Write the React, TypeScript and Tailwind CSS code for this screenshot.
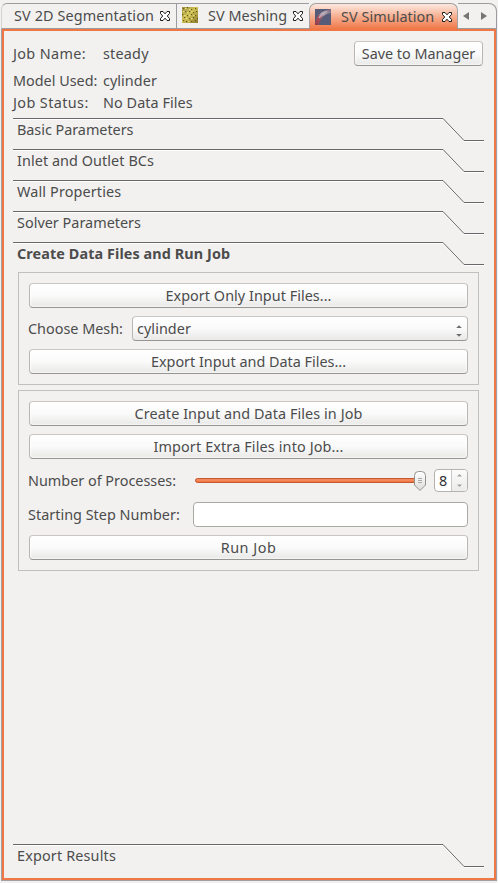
import type { ReactNode } from "react";

function CloseIcon() {
  return (
    <svg width="12" height="12" viewBox="0 0 12 12" className="shrink-0">
      <path
        d="M1.500 1.500H4L6 3.800L8 1.500H10.500V3.500L8.300 6L10.500 8.500V10.500H8L6 8.200L4 10.500H1.500V8.500L3.700 6L1.500 3.500Z"
        stroke="#1a1a1a"
        strokeWidth="1"
        fill="#fff"
      />
    </svg>
  );
}

function MeshIcon() {
  const dots = [
    [1, 1], [5, 0], [9, 2], [13, 1], [3, 4], [7, 4], [11, 5], [14, 4], [0, 7], [5, 8], [9, 7], [13, 8],
    [2, 10], [7, 11], [11, 10], [15, 11], [1, 13], [4, 14], [9, 14], [13, 13],
  ];
  const lights = [[3, 1], [7, 2], [1, 4], [5, 5], [9, 4], [2, 8], [7, 8], [11, 8], [4, 11], [9, 11], [6, 14]];
  return (
    <svg width="16" height="16" viewBox="0 0 16 16" className="shrink-0">
      <defs>
        <linearGradient id="mesh" x1="0" y1="0" x2="1" y2="1">
          <stop offset="0" stopColor="#9d9040" />
          <stop offset="0.45" stopColor="#d0c254" />
          <stop offset="1" stopColor="#8c7c2c" />
        </linearGradient>
      </defs>
      <rect width="16" height="16" fill="url(#mesh)" />
      {dots.map(([x, y]) => (
        <rect key={`d${x}-${y}`} x={x} y={y} width="1.2" height="1.2" fill="#66591e" />
      ))}
      {lights.map(([x, y]) => (
        <rect key={`l${x}-${y}`} x={x} y={y} width="1.5" height="1.2" fill="#e9df7c" />
      ))}
    </svg>
  );
}

function SimulationIcon() {
  return (
    <svg width="16" height="16" viewBox="0 0 16 16" className="shrink-0">
      <defs>
        <linearGradient id="vessel" x1="0" y1="1" x2="1" y2="0">
          <stop offset="0" stopColor="#8f3a4c" />
          <stop offset="0.35" stopColor="#a8505a" />
          <stop offset="0.6" stopColor="#b3a3b0" />
          <stop offset="1" stopColor="#79637a" />
        </linearGradient>
      </defs>
      <rect width="16" height="16" fill="#565c78" />
      <path d="M0 16C0 9 4 2 16 0V4C9 5 5 9 4 16Z" fill="url(#vessel)" />
      <path d="M4 9C6 5.500 8 3.500 12 2.500" stroke="#bdb8c8" strokeWidth="1.2" fill="none" />
    </svg>
  );
}

function Section({ title, className }: { title: string; className: string }) {
  return (
    <div className="grid h-[31px] shrink-0 content-start">
      <svg width="471" height="25" viewBox="0 0 471 25" className="col-start-1 row-start-1" fill="none">
        <path d="M0 1.500H430L451 23.500H471" stroke="#fff" />
        <path d="M0 .5H430L451 22.500H471" stroke="#68676a" />
      </svg>
      <div className="col-start-1 row-start-1 flex h-[23px] items-center pl-[4px]">
        <span className={className}>{title}</span>
      </div>
    </div>
  );
}

function Button({ children, className }: { children: ReactNode; className: string }) {
  return (
    <button
      className={`flex h-[25px] shrink-0 items-center justify-center rounded-[4px] border border-[#b9b7b4] border-t-[#c9c6c3] border-b-[#989693] bg-linear-to-b from-white via-[#fafafa] to-[#e9e8e7] shadow-[inset_0_0_2px_1px_#ffffffaa] ${className}`}
    >
      {children}
    </button>
  );
}

export default function App() {
  return (
    <div className="flex h-[883px] w-[498px] flex-col bg-[#f2f1f0] px-px pb-[2px] font-['Noto_Sans',sans-serif] text-[14.4px] leading-[20px] whitespace-nowrap text-[#4c4c4c]">
      <div className="flex h-[29px] shrink-0 pt-[3px]">
        <div className="flex w-[176px] items-center rounded-tl-[6px] border border-l-[#d5d4d3] border-[#9c9b9f] pl-[12px]">
          <span className="w-[145px] tracking-[0.12px]">SV 2D Segmentation</span>
          <CloseIcon />
        </div>
        <div className="flex w-[132px] items-center border-y border-[#9c9b9f] pl-[5px]">
          <div className="pb-[2px]">
            <MeshIcon />
          </div>
          <span className="ml-[10px] w-[84px] tracking-[0.04px]">SV Meshing</span>
          <CloseIcon />
        </div>
        <div className="flex w-[149px] items-center rounded-t-[7px] border border-b-0 border-[#a5a09f] bg-linear-to-b from-[#fbe3da] from-5% via-[#f6ae8f] via-50% to-[#f07746] pl-[5px]">
          <SimulationIcon />
          <span className="ml-[10px] w-[100px] tracking-[0.06px]">SV Simulation</span>
          <CloseIcon />
        </div>
        <div className="flex grow items-center justify-between rounded-tr-[8px] border border-l-0 border-[#9c9b9f] pr-[9px] pl-[5px]">
          <svg width="6" height="8" viewBox="0 0 6 8">
            <path d="M6 0V8L0 4Z" fill="#777574" />
          </svg>
          <svg width="6" height="8" viewBox="0 0 6 8">
            <path d="M0 0V8L6 4Z" fill="#777574" />
          </svg>
        </div>
      </div>

      <div className="flex grow border border-t-0 border-[#a1a0a4]">
        <div className="flex grow flex-col border-2 border-[#f07746] pt-[10px] pr-[10px] pb-[3px] pl-[9px]">
          <div className="mr-px flex h-[25px] shrink-0 items-center">
            <span className="w-[90px] tracking-[0.36px]">Job Name:</span>
            <span className="grow tracking-[0.2px]">steady</span>
            <Button className="w-[129px] tracking-[-0.02px]">Save to Manager</Button>
          </div>
          <div className="mt-[4px] flex h-[21px] shrink-0 items-center">
            <span className="w-[90px]">Model Used:</span>
            <span className="tracking-[0.05px]">cylinder</span>
          </div>
          <div className="mt-px mb-[5px] flex h-[21px] shrink-0 items-center">
            <span className="w-[90px] tracking-[0.4px]">Job Status:</span>
            <span className="tracking-[0.06px]">No Data Files</span>
          </div>

          <Section title="Basic Parameters" className="tracking-[-0.03px]" />
          <Section title="Inlet and Outlet BCs" className="tracking-[0.07px]" />
          <Section title="Wall Properties" className="tracking-[0.14px]" />
          <Section title="Solver Parameters" className="tracking-[0.02px]" />
          <Section title="Create Data Files and Run Job" className="font-bold tracking-[0.09px]" />

          <div className="mx-[5px] -mt-px flex shrink-0 flex-col gap-[8px] border border-[#c1c0bf] p-[10px]">
            <Button className="tracking-[0.04px]">Export Only Input Files...</Button>
            <div className="-ml-px flex h-[25px] items-center">
              <span className="w-[104px]">Choose Mesh:</span>
              <div className="flex h-[25px] grow items-center justify-between rounded-[4px] border border-[#b9b7b4] border-t-[#c9c6c3] border-b-[#989693] bg-linear-to-b from-white via-[#fafafa] to-[#e9e8e7] pr-[5px] pl-[4px]">
                <span className="tracking-[0.06px]">cylinder</span>
                <svg width="6" height="12" viewBox="0 0 6 12" className="mt-[5px]" fill="#6c6b69">
                  <path d="M.2 3L3 .2L5.800 3Z" />
                  <path d="M.2 9L3 11.800L5.800 9Z" />
                </svg>
              </div>
            </div>
            <Button className="">Export Input and Data Files...</Button>
          </div>

          <div className="mx-[5px] mt-[5px] flex shrink-0 flex-col gap-[8px] border border-[#c1c0bf] p-[10px]">
            <Button className="tracking-[0.08px]">Create Input and Data Files in Job</Button>
            <Button className="tracking-[0.14px]">Import Extra Files into Job...</Button>
            <div className="-ml-px flex h-[27px] items-center">
              <span className="w-[167px]">Number of Processes:</span>
              <svg width="232" height="23" viewBox="0 0 232 23">
                <defs>
                  <linearGradient id="handle" x1="0" y1="0" x2="0" y2="1">
                    <stop offset="0" stopColor="#fff" />
                    <stop offset="1" stopColor="#dddcdb" />
                  </linearGradient>
                </defs>
                <rect x=".5" y="9.500" width="226" height="4" rx="2" fill="#f07746" stroke="#c4592f" />
                <path d="M2 11H220" stroke="#f79871" />
                <path
                  d="M223.500 2.500H226.500Q230.500 2.500 230.500 6.500V16L225 21.500L219.500 16V6.500Q219.500 2.500 223.500 2.500Z"
                  fill="url(#handle)"
                  stroke="#94928f"
                />
                <path d="M223 9.500H227M223 11.500H227M223 13.500H227" stroke="#a9a8a6" />
              </svg>
              <div className="ml-[7px] flex h-[23px] w-[34px] overflow-hidden rounded-[4px] border border-[#b5b3b0] bg-white">
                <span className="flex w-[16px] items-center justify-center text-[#333]">8</span>
                <div className="flex grow items-center justify-center border-l border-[#c9c7c5] bg-linear-to-b from-[#fbfbfb] to-[#ececeb]">
                  <svg width="5" height="13" viewBox="0 0 5 13" fill="#a3a19f">
                    <path d="M0 2.500L2.500 0L5 2.500Z" />
                    <path d="M0 10.500L2.500 13L5 10.500Z" />
                  </svg>
                </div>
              </div>
            </div>
            <div className="-ml-px flex h-[25px] items-center">
              <span className="w-[165px] tracking-[0.02px]">Starting Step Number:</span>
              <div className="h-[25px] grow rounded-[4px] border border-[#aaa8a5] bg-white" />
            </div>
            <Button className="tracking-[0.5px]">Run Job</Button>
          </div>

          <div className="grow" />
          <Section title="Export Results" className="tracking-[0.16px]" />
        </div>
      </div>
    </div>
  );
}
